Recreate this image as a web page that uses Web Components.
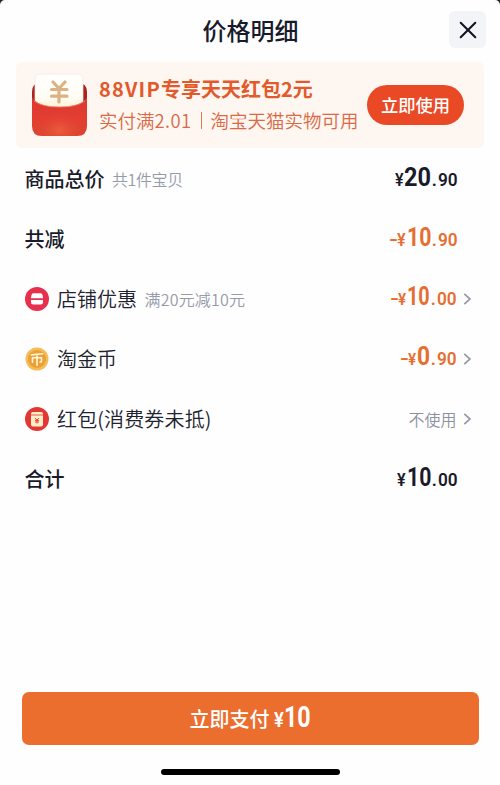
<!DOCTYPE html>
<html lang="zh-CN">
<head>
<meta charset="utf-8">
<title>价格明细</title>
<style>
html,body{margin:0;height:100%;background:#242424}
body{font-family:"Noto Sans CJK SC","Noto Sans",sans-serif;color:#191b2b;overflow:hidden}
</style>
</head>
<body>
<price-sheet>
  <sheet-header slot="header">价格明细</sheet-header>
  <coupon-banner slot="banner">
    <span slot="title"><span style="letter-spacing:1.2px">88VIP</span>专享天天红包2元</span>
    <span slot="first">实付满<span style="letter-spacing:.4px">2.01</span></span>
    <span slot="second">淘宝天猫实物可用</span>
    <span slot="action">立即使用</span>
  </coupon-banner>
  <price-row strong>商品总价<span slot="note" style="letter-spacing:-.4px">共1件宝贝</span><money-value slot="value" whole="20" cents="90"></money-value></price-row>
  <price-row strong>共减<money-value slot="value" minus whole="10" cents="90"></money-value></price-row>
  <price-row arrow><row-icon slot="icon" kind="shop"></row-icon>店铺优惠<span slot="note" style="letter-spacing:.2px">满20元减10元</span><money-value slot="value" minus small whole="10" cents="00"></money-value></price-row>
  <price-row arrow><row-icon slot="icon" kind="coin"></row-icon>淘金币<money-value slot="value" minus small whole="0" cents="90"></money-value></price-row>
  <price-row arrow><row-icon slot="icon" kind="packet"></row-icon><span style="letter-spacing:.15px">红包(消费券未抵)</span><span slot="value">不使用</span></price-row>
  <price-row strong>合计<money-value slot="value" whole="10" cents="00"></money-value></price-row>
  <pay-button slot="footer">立即支付<money-value slot="amount" large whole="10"></money-value></pay-button>
</price-sheet>
<script>
const define = (name, html) => customElements.define(name, class extends HTMLElement {
  connectedCallback() {
    if (this.shadowRoot) return;
    const root = this.attachShadow({ mode: 'open' });
    const template = document.createElement('template');
    template.innerHTML = typeof html === 'function' ? html(this) : html;
    root.append(template.content.cloneNode(true));
  }
});

define('price-sheet', `<style>
:host{display:flex;flex-direction:column;box-sizing:border-box;width:500px;height:785px;background:#fefefe;border-radius:5px 5px 0 0}
main{flex:1;padding:.5px 28.5px 0 24.5px}
footer{display:flex;flex-direction:column;align-items:center;padding-bottom:10px}
.home{width:179px;height:6px;border-radius:3px;background:#000;margin-top:24px}
</style><slot name="header"></slot><slot name="banner"></slot><main><slot></slot></main><footer><slot name="footer"></slot><div class="home"></div></footer>`);

define('sheet-header', `<style>
:host{display:grid;grid-template-columns:1fr auto 1fr;align-items:center;height:62px;padding:0 14px 3px 15px;box-sizing:border-box;font-size:24px;font-weight:500;line-height:1}
button{justify-self:end;width:37px;height:37px;padding:0;border:0;border-radius:6px;background:#f2f4f8;display:grid;place-items:center}
</style><i></i><span><slot></slot></span><button aria-label="关闭"><svg width="18" height="18" viewBox="0 0 18 18" fill="none" stroke="#10121d" stroke-width="2" stroke-linecap="round"><path d="M1.7 1.7 16.3 16.3M16.3 1.7 1.7 16.3"/></svg></button>`);

define('coupon-banner', `<style>
:host{display:flex;align-items:center;box-sizing:border-box;height:86px;margin:0 16px;padding:0 20px 0 15px;background:#fdf6f1;border-radius:6px;color:#e25a2c}
.art{flex:none;margin-right:11px}
.text{flex:1;white-space:nowrap}
.title{font-size:20px;font-weight:700;line-height:30px;height:30px}
.sub{display:flex;align-items:center;font-size:18.5px;font-weight:350;line-height:30px;height:32px;color:#d96a45}
.sub i{width:1px;height:17px;background:#db7b59;margin:1px 9px 0 9px}
button{flex:none;width:97px;height:40px;padding:0 0 2px;border:0;border-radius:20px;background:#e94a25;color:#fff;font:500 17.3px "Noto Sans CJK SC",sans-serif}
</style>
<svg class="art" width="57" height="64" viewBox="0 0 57 64">
<defs><linearGradient id="f" x2="0" y2="1"><stop stop-color="#dc3832"/><stop offset=".6" stop-color="#e33e31"/><stop offset="1" stop-color="#d84630"/></linearGradient><linearGradient id="p" x2="0" y2="1"><stop stop-color="#fffefd"/><stop offset=".65" stop-color="#fffdf5"/><stop offset="1" stop-color="#fff1d2"/></linearGradient><radialGradient id="g" cy=".85" r=".5"><stop stop-color="#f16b42" stop-opacity=".65"/><stop offset="1" stop-color="#e23d32" stop-opacity="0"/></radialGradient></defs>
<path d="M1 19Q1 10 9 10H47Q56 10 56 19V36H1Z" fill="#ad211e"/>
<path d="M4 36V7Q4 1 10 1H46Q52 1 52 7V36Z" fill="url(#p)" stroke="#eee8e3" stroke-width=".7"/>
<path d="M1 24Q6 34 28.5 34T56 24V53Q56 63 46 63H11Q1 63 1 53Z" fill="url(#f)"/>
<path d="M1 24Q6 34 28.5 34T56 24V53Q56 63 46 63H11Q1 63 1 53Z" fill="url(#g)"/>
<path d="M3 28Q11 34 28.5 34T54 28" fill="none" stroke="#f28564" stroke-width=".8"/>
<path d="M22 9 28 15.5 34 9M20.5 16.5H36M20.5 23.2H36M28 16V29" fill="none" stroke="#dcb284" stroke-width="3.2" stroke-linecap="round" stroke-linejoin="round"/>
</svg>
<div class="text"><div class="title"><slot name="title"></slot></div><div class="sub"><slot name="first"></slot><i></i><slot name="second"></slot></div></div><button><slot name="action"></slot></button>`);

define('price-row', el => `<style>
:host{display:flex;align-items:center;height:60px;font-size:20px;line-height:30px;font-weight:350;color:#20222e;white-space:nowrap;margin-right:14px}
:host([arrow]){margin-right:0}
:host([strong]){font-weight:500;color:#191b2b}
::slotted([slot=icon]){margin-right:8.5px}
::slotted([slot=note]){font-size:16px;font-weight:350;color:#969baa;margin-left:7.5px;padding-top:1px}
.value{margin-left:auto;font-size:16px;font-weight:350;color:#8d919e}
.arrow{margin-left:6px}
</style><slot name="icon"></slot><span><slot></slot></span><slot name="note"></slot><span class="value"><slot name="value"></slot></span>${el.hasAttribute('arrow') ? '<svg class="arrow" width="9" height="14" viewBox="0 0 9 14" fill="none" stroke="#969aa5" stroke-width="1.7"><path d="M1.3 1.8 7 7 1.3 12.2"/></svg>' : ''}`);

define('money-value', el => {
  const small = el.hasAttribute('small'), large = el.hasAttribute('large'), minus = el.hasAttribute('minus');
  const whole = el.getAttribute('whole'), cents = el.getAttribute('cents');
  const size = large ? 29 : small ? 25 : 26;
  const digit = large ? 13.4 : whole === '0' ? 13.1 : whole === '20' ? 13.5 : small ? 11.4 : 12.2;
  const width = digit * whole.length;
  return `<style>
:host{display:flex;align-items:baseline;font-family:Roboto,"Noto Sans",sans-serif;font-weight:600;line-height:30px;color:${large ? '#fff' : minus ? '#e56e33' : '#191b2b'}}
span{display:block;transform-origin:0 50%;white-space:nowrap}
.minus{width:8.6px;font-size:19px;transform:scaleX(1.3)}
.yen{width:${large ? 10 : small ? 8.7 : 9.3}px;font-size:${large ? 20 : small ? 16.5 : 17.5}px;transform:scaleX(.92)}
.whole{width:${width}px;font-size:${size}px;font-weight:700;transform:scaleX(${width / (whole.length * size * .575)})}
.dot{width:7px;font-size:18px;text-align:center}
.cents{width:19.6px;font-size:18.5px;transform:scaleX(.93)}
</style>${minus ? '<span class="minus">-</span>' : ''}<span class="yen">¥</span><span class="whole">${whole}</span>${cents ? `<span class="dot">.</span><span class="cents">${cents}</span>` : ''}`;
});

const icons = {
  shop: '<circle cx="12" cy="12" r="12" fill="#e6304e"/><path d="M8.5 6.2H15.5Q17.8 6.2 18 11.3H6Q6.2 6.2 8.5 6.2ZM6 13.1H18V15Q18 17.5 15.5 17.5H8.5Q6 17.5 6 15Z" fill="#fff"/>',
  coin: '<circle cx="12" cy="12" r="11.5" fill="#f5bc59"/><circle cx="12" cy="12" r="9" fill="#e9a137"/><g fill="none" stroke="#fff4d8" stroke-width="1.6" stroke-linecap="round" stroke-linejoin="round"><path d="M6.5 7.9 17.5 6.8M12 7.6V18.3M7.5 15.3V10.8H16.5V14.4Q16.5 15.2 15 15"/></g>',
  packet: '<circle cx="12" cy="12" r="12" fill="#e23735"/><rect x="6" y="5" width="12" height="14.5" rx="1.7" fill="#ffefc9"/><path d="M6 8H18" fill="none" stroke="#e45a43" stroke-width="1"/><path d="M10 11 12 13.1 14 11M10 13.4H14M10 15H14M12 13V16.5" fill="none" stroke="#e5483c" stroke-width="1"/>'
};
define('row-icon', el => `<style>:host{display:block;width:24px;height:24px}svg{display:block}</style><svg width="24" height="24" viewBox="0 0 24 24">${icons[el.getAttribute('kind')]}</svg>`);

define('pay-button', `<style>
:host{display:block;width:457px;height:53px}
button{display:flex;align-items:center;justify-content:center;gap:4px;width:100%;height:100%;padding:0;border:0;border-radius:7px;background:#eb6e2f;color:#fff;font:500 20px/30px "Noto Sans CJK SC",sans-serif}
</style><button><span><slot></slot></span><slot name="amount"></slot></button>`);
</script>
</body>
</html>
